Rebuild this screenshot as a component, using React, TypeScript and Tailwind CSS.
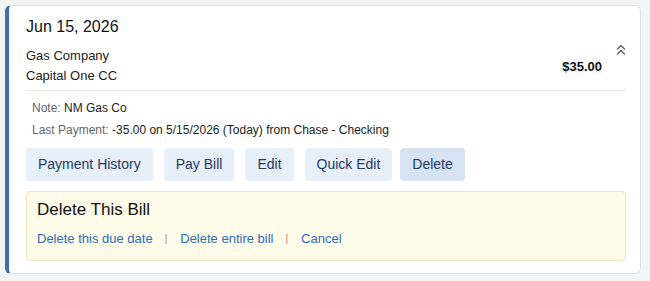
import React from "react";

const buttons = ["Payment History", "Pay Bill", "Edit", "Quick Edit", "Delete"];

const DoubleChevron = () => (
  <svg width="10" height="12" viewBox="0 0 10 12" fill="none" stroke="#6b6b6b" strokeWidth="1.6" strokeLinecap="round" strokeLinejoin="round">
    <polyline points="1.5,5 5,1.5 8.5,5" />
    <polyline points="1.5,10 5,6.5 8.5,10" />
  </svg>
);

export default function App() {
  return (
    <div className="min-h-[281px] bg-[#f3f4f6] p-[5px] font-['Liberation_Sans',Arial,sans-serif]">
      <div className="w-[636px] rounded-md border border-[#dde1e6] border-l-4 border-l-[#3e6db0] bg-white pl-[17px] pr-[14px] pt-2 pb-[12px]">
        <div className="text-[16px] leading-[26px] text-[#111]">Jun 15, 2026</div>

        <div className="mt-[6px] flex border-b border-[#e8e8e8] pb-1">
          <div className="flex-1 text-[13px] leading-[20px] text-[#222]">
            <div>Gas Company</div>
            <div>Capital One CC</div>
          </div>
          <div className="self-center pt-[1px] text-[13px] font-bold text-[#111]">$35.00</div>
          <div className="ml-[14px] -mt-[2px] self-start">
            <DoubleChevron />
          </div>
        </div>

        <div className="pl-[6px] pt-[6px] text-[12px] leading-[22px] text-[#222]">
          <div>
            <span className="text-[#666]">Note:</span> NM Gas Co
          </div>
          <div>
            <span className="text-[#666]">Last Payment:</span> -35.00 on 5/15/2026 (Today) from Chase - Checking
          </div>
        </div>

        <div className="mt-[7px] flex gap-[11px]">
          {buttons.map((b) => (
            <button
              key={b}
              className={
                b === "Delete"
                  ? "-ml-[3px] h-[33px] rounded px-[12px] text-[14px] text-[#1f3a66] bg-[#d6e3f2]"
                  : "h-[33px] rounded px-[12px] text-[14px] text-[#1f3a66] bg-[#e7eff8]"
              }
            >
              {b}
            </button>
          ))}
        </div>

        <div className="mt-[10px] rounded border border-[#eee4bd] bg-[#fefbe9] px-[10px] pt-[6px] pb-[11px]">
          <div className="text-[17px] leading-[24px] text-[#111]">Delete This Bill</div>
          <div className="mt-[7px] flex items-center text-[13px] leading-[20px] text-[#2f6db4]">
            <a href="#">Delete this due date</a>
            <span className="ml-[12px] mr-[13px] text-[10px] text-[#888]">|</span>
            <a href="#">Delete entire bill</a>
            <span className="ml-[12px] mr-[13px] text-[10px] text-[#888]">|</span>
            <a href="#">Cancel</a>
          </div>
        </div>
      </div>
    </div>
  );
}
